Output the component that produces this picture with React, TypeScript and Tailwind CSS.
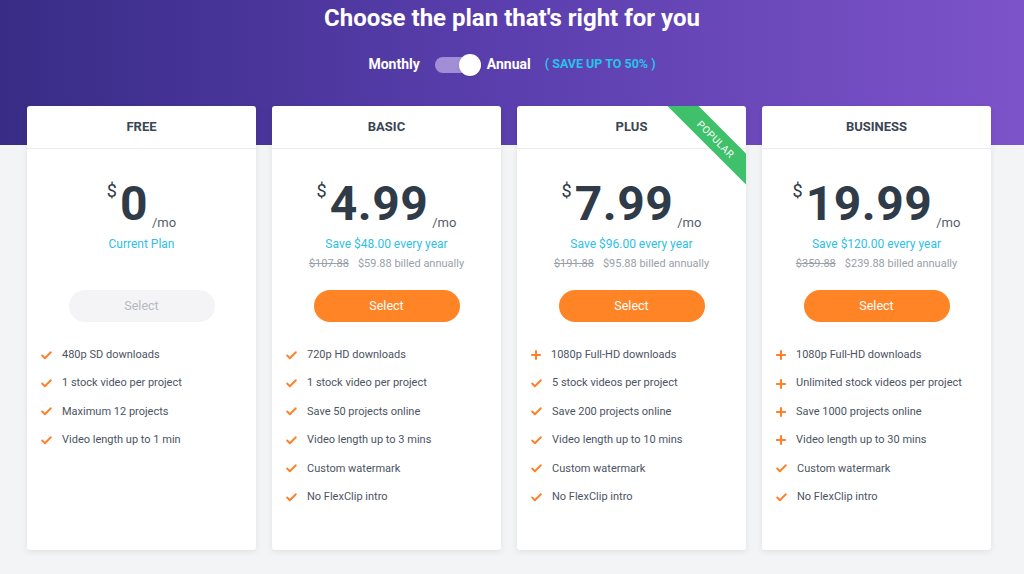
import { Check, Plus } from 'lucide-react';

type Feature = { text: string; plus?: boolean };

type Plan = {
  name: string;
  price: string;
  save?: string;
  old?: string;
  billed?: string;
  current?: boolean;
  popular?: boolean;
  features: Feature[];
};

const plans: Plan[] = [
  {
    name: 'FREE',
    price: '0',
    current: true,
    features: [
      { text: '480p SD downloads' },
      { text: '1 stock video per project' },
      { text: 'Maximum 12 projects' },
      { text: 'Video length up to 1 min' },
    ],
  },
  {
    name: 'BASIC',
    price: '4.99',
    save: 'Save $48.00 every year',
    old: '$107.88',
    billed: '$59.88 billed annually',
    features: [
      { text: '720p HD downloads' },
      { text: '1 stock video per project' },
      { text: 'Save 50 projects online' },
      { text: 'Video length up to 3 mins' },
      { text: 'Custom watermark' },
      { text: 'No FlexClip intro' },
    ],
  },
  {
    name: 'PLUS',
    price: '7.99',
    save: 'Save $96.00 every year',
    old: '$191.88',
    billed: '$95.88 billed annually',
    popular: true,
    features: [
      { text: '1080p Full-HD downloads', plus: true },
      { text: '5 stock videos per project' },
      { text: 'Save 200 projects online' },
      { text: 'Video length up to 10 mins' },
      { text: 'Custom watermark' },
      { text: 'No FlexClip intro' },
    ],
  },
  {
    name: 'BUSINESS',
    price: '19.99',
    save: 'Save $120.00 every year',
    old: '$359.88',
    billed: '$239.88 billed annually',
    features: [
      { text: '1080p Full-HD downloads', plus: true },
      { text: 'Unlimited stock videos per project', plus: true },
      { text: 'Save 1000 projects online', plus: true },
      { text: 'Video length up to 30 mins', plus: true },
      { text: 'Custom watermark' },
      { text: 'No FlexClip intro' },
    ],
  },
];

const PlanCard = ({ plan }: { plan: Plan }) => (
  <div className="relative overflow-hidden bg-white rounded-[3px] shadow-[0_2px_6px_rgba(0,0,0,0.08)] h-[444px] flex flex-col">
    {plan.popular && (
      <div className="absolute top-[22px] right-[-30px] w-[120px] h-[22px] bg-[#3fc06a] rotate-45 flex items-center justify-center">
        <span className="text-white text-[10px] tracking-[0.5px]">POPULAR</span>
      </div>
    )}
    {/* Header */}
    <div className="h-[43px] flex items-center justify-center border-b border-[#ececf0]">
      <span className="text-[13px] font-bold text-[#3b4553]">{plan.name}</span>
    </div>

    {/* Price */}
    <div className="flex flex-col items-center pt-[31px]">
      <div className="flex items-start text-[#2f3b48]">
        <span className="text-[18px] leading-none mt-[2px] mr-[3px]">$</span>
        <span className="text-[48px] font-bold leading-[48px] tracking-[0.5px]">{plan.price}</span>
        <span className="text-[13px] text-[#555e6b] self-end ml-[4px] mb-[-4px]">/mo</span>
      </div>
      <div className="mt-[7px] text-[12px] text-[#2ec0e6] h-[16px]">
        {plan.current ? 'Current Plan' : plan.save}
      </div>
      <div className="mt-[5px] h-[14px] text-[11px] text-[#9aa0a8] flex gap-[9px]">
        {plan.old && (
          <>
            <span className="line-through">{plan.old}</span>
            <span>{plan.billed}</span>
          </>
        )}
      </div>
      <button
        className={
          plan.current
            ? 'mt-[20px] w-[146px] h-[32px] rounded-full bg-[#f4f4f6] text-[12.5px] text-[#b6b9bf]'
            : 'mt-[20px] w-[146px] h-[32px] rounded-full bg-[#ff8426] text-[12.5px] text-white'
        }
      >
        Select
      </button>
    </div>

    {/* Features */}
    <ul className="mt-[25px] px-[13px] flex flex-col gap-[12px]">
      {plan.features.map((f, i) => (
        <li key={i} className="flex items-center gap-[9px] h-[16.4px] text-[11px] text-[#4b5463]">
          {f.plus ? (
            <Plus className="w-[14px] h-[14px] text-[#ff7f2a] -ml-[1px] mr-[-1px]" strokeWidth={3.5} />
          ) : (
            <Check className="w-[13px] h-[13px] text-[#ff7f2a]" strokeWidth={3.5} />
          )}
          <span>{f.text}</span>
        </li>
      ))}
    </ul>
  </div>
);

export default function App() {
  return (
    <div className="w-[1024px] h-[574px] overflow-hidden bg-[#f3f4f6] font-['Roboto',sans-serif] relative">
      {/* Header band */}
      <div className="h-[145px] bg-gradient-to-r from-[#382c86] via-[#5b3fae] to-[#7d53c9]">
        <div className="flex flex-col items-center pt-[3px]">
          <h1 className="text-[24px] font-bold text-white leading-[30px]">Choose the plan that's right for you</h1>
          <div className="mt-[21px] flex items-center text-[14px] font-bold text-white">
            <span>Monthly</span>
            <div className="ml-[15px] relative w-[46px] h-[16px] rounded-full bg-[#a08fd6]">
              <div className="absolute right-0 top-[-3px] w-[22px] h-[22px] rounded-full bg-white shadow" />
            </div>
            <span className="ml-[6px]">Annual</span>
            <span className="ml-[14px] text-[12.5px] text-[#25c4e8]">( SAVE UP TO 50% )</span>
          </div>
        </div>
      </div>

      {/* Cards */}
      <div className="absolute top-[106px] left-[27px] grid grid-cols-4 gap-[16px] w-[964px]">
        {plans.map((p) => (
          <PlanCard key={p.name} plan={p} />
        ))}
      </div>
    </div>
  );
}
